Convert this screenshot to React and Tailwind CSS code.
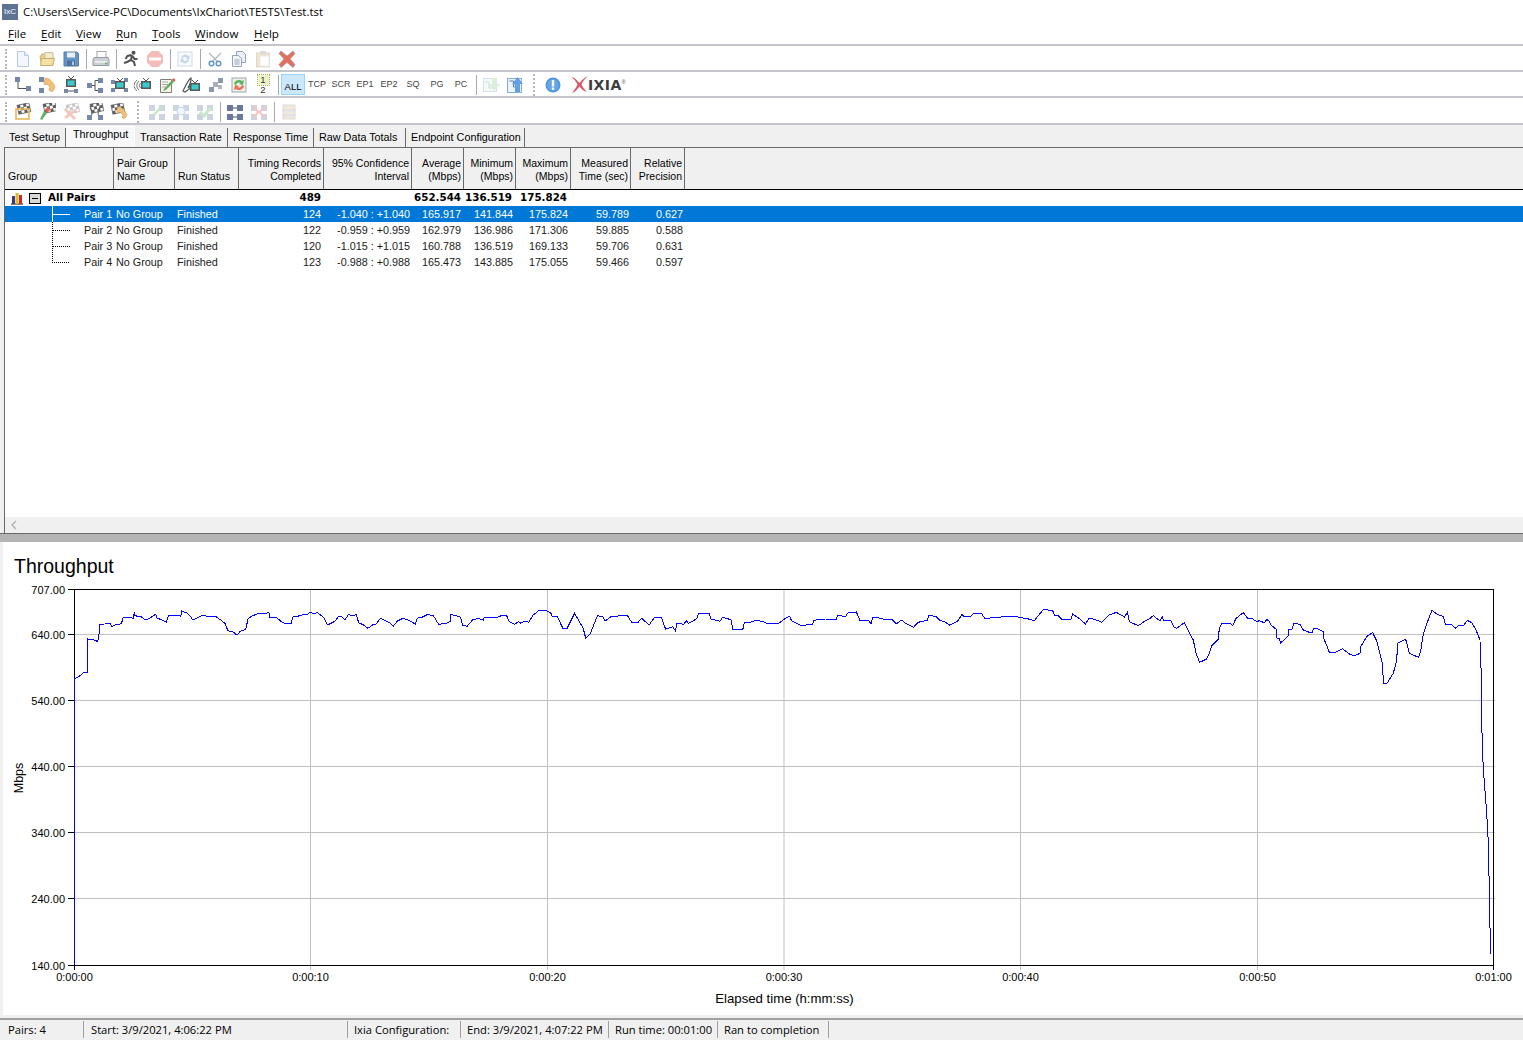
import React from "react";

const A = [[40,282],[50,277],[65,264],[77,261],[77,162],[100,166],[105,170],[109,158],[110,118],[125,117],[140,115],[145,124],[155,120],[172,116],[177,97],[192,97],[205,100],[208,82],[210,92],[228,96],[240,105],[255,97],[268,88],[272,100],[285,104],[298,112],[303,93],[320,92],[333,90],[338,95],[341,78],[355,84],[366,95],[372,105],[385,98],[400,91],[420,96],[435,94],[450,105],[462,115],[470,137],[485,141],[495,150],[505,139],[520,133],[527,100],[540,92],[556,85],[575,87],[585,81],[587,97],[607,98],[620,110],[632,117],[647,115],[653,95],[668,93],[680,89],[690,90],[700,82],[712,87],[720,82],[738,97],[748,117],[755,117],[770,109],[780,94],[790,96],[798,104],[808,88],[818,93],[830,88],[836,113],[850,120],[862,130],[875,120],[885,117],[897,100],[910,106],[925,115],[933,124],[945,108],[960,100],[975,105],[995,117],[1000,100],[1015,96],[1028,89],[1045,91],[1060,118],[1082,115],[1092,110],[1094,88],[1112,93],[1122,97],[1127,120],[1140,124],[1155,105],[1170,100],[1185,105],[1188,97],[1225,97],[1240,90],[1250,90],[1258,110],[1272,118],[1285,110],[1290,115],[1300,108],[1312,112],[1325,90],[1340,77],[1358,75],[1375,85],[1378,93],[1392,94],[1408,130],[1420,130],[1441,85],[1465,130],[1472,160],[1485,145],[1505,92]];
const B = [[0,64],[8,65],[14,78],[30,65],[50,63],[75,61],[87,82],[105,82],[114,70],[125,80],[135,90],[150,67],[170,69],[180,102],[200,95],[207,107],[212,84],[230,88],[238,77],[243,85],[265,72],[272,55],[300,55],[305,72],[330,79],[337,67],[360,74],[366,105],[393,102],[397,81],[415,81],[430,76],[450,80],[460,86],[490,86],[510,70],[522,64],[527,78],[545,87],[555,92],[585,87],[588,76],[620,72],[650,72],[654,61],[675,65],[682,53],[705,51],[715,77],[740,78],[745,87],[750,67],[775,70],[780,73],[805,75],[815,86],[830,75],[840,85],[862,97],[875,82],[900,76],[905,60],[925,65],[935,76],[950,82],[962,91],[985,77],[995,58],[1000,64],[1020,63],[1027,55],[1048,54],[1058,70],[1090,68],[1115,64],[1140,64],[1160,68],[1178,72],[1195,77],[1205,62],[1220,43],[1245,47],[1250,60],[1260,62],[1270,73],[1295,72],[1300,57],[1320,72],[1335,87],[1345,70],[1360,73],[1380,82],[1400,60],[1420,52],[1442,66],[1450,52],[1456,80],[1480,92],[1500,77]];
const C = [[0,100],[10,92],[30,108],[37,95],[40,105],[62,105],[72,127],[80,130],[103,113],[125,158],[130,165],[138,205],[149,232],[170,222],[178,205],[185,182],[205,162],[208,130],[215,116],[240,115],[248,122],[258,100],[280,83],[292,99],[305,100],[320,110],[328,107],[343,113],[350,104],[357,107],[362,120],[378,132],[381,160],[389,160],[391,175],[415,152],[417,133],[426,133],[431,115],[450,118],[460,135],[478,142],[488,142],[490,130],[500,130],[520,140],[522,163],[532,185],[538,202],[557,202],[577,191],[600,208],[612,213],[630,205],[633,183],[652,153],[668,143],[680,168],[698,240],[700,296],[712,294],[730,265],[740,225],[743,174],[767,163],[778,205],[805,217],[812,200],[818,155],[828,122],[846,76],[860,87],[880,95],[886,118],[905,120],[916,130],[925,122],[942,120],[952,106],[965,113],[978,135],[990,165],[991,248],[994,250]];
const D = [[124,0],[125,65],[128,170],[131,222],[135,272],[139,322],[142,372],[145,425],[147,527],[149,590],[150,685],[152,762]];

const tracePoints = [
  [74.5, 965],
  ...A.map(([x, y]) => [60 + x / 2.8, 585 + y / 3]),
  ...B.map(([x, y]) => [600 + x / 2.75, 595 + y / 3]),
  ...C.map(([x, y]) => [1150 + x / 3, 585 + y / 3]),
  ...D.map(([x, y]) => [1440 + x / 3, 700 + y / 3]),
]
  .map(([x, y]) => `${x.toFixed(1)},${y.toFixed(1)}`)
  .join(" ");

const Ico = ({ children, faded }) => (
  <div className="w-6 h-6 flex items-center justify-center shrink-0">
    <svg width="18" height="18" viewBox="0 0 18 18" className={faded ? "opacity-30" : "opacity-85"}>
      {children}
    </svg>
  </div>
);
const Sq = ({ x, y, s = 4, c = "#5f7498" }) => <rect x={x} y={y} width={s} height={s} fill={c} />;
const Tv = ({ x = 6, y = 5 }) => (
  <g>
    <path d={`M${x + 2} ${y - 4}l3 3 3-3`} stroke="#333" fill="none" />
    <rect x={x} y={y - 1} width="10" height="8" fill="#3b3b32" />
    <rect x={x + 1.5} y={y + 0.5} width="7" height="5" fill="#17c3c9" />
  </g>
);
const Flag = ({ x = 3, y = 1 }) => (
  <g transform={`rotate(-12 ${x + 6} ${y + 5})`}>
    <rect x={x} y={y} width="12" height="9" fill="#fff" stroke="#666" />
    <path d={`M${x} ${y}h3v3h-3zM${x + 6} ${y}h3v3h-3zM${x + 3} ${y + 3}h3v3h-3zM${x + 9} ${y + 3}h3v3h-3zM${x} ${y + 6}h3v3h-3zM${x + 6} ${y + 6}h3v3h-3z`} fill="#444" />
  </g>
);
const Phone = () => (
  <path d="M8 2c2 0 7 3 9 9l-2 4c-1 1-4 0-4-1l1-3-3-3-2 1C5 7 6 2 8 2z" fill="#efb660" stroke="#c58a3c" strokeWidth=".6" />
);

const toolbar1 = [
  <Ico key="n"><path d="M3.5 1.5h7l4 4v11h-11z" fill="#f1f6fd" stroke="#a7c1e2" /><path d="M10.5 1.5v4h4" fill="#dce9f8" stroke="#a7c1e2" /></Ico>,
  <Ico key="o"><path d="M2 7l2-3h4l1 1.500h6v10H4z" fill="#e6c877" stroke="#bca35a" /><path d="M7 2.500h8v7H7z" fill="#f2e6c2" stroke="#c6b98e" /><path d="M3.500 8.500h13l-2 7h-12z" fill="#f3dc94" stroke="#bca35a" /></Ico>,
  <Ico key="s"><path d="M2 2h13l1.500 1.500V16H2z" fill="#4c82bb" stroke="#3a6797" /><rect x="5" y="2.500" width="8" height="5" fill="#e6eef7" /><rect x="5" y="10.500" width="8" height="5.500" fill="#2e5a8a" /><rect x="10" y="11.500" width="2" height="3.500" fill="#a9c3de" /></Ico>,
  "s6",
  <Ico key="p"><rect x="5" y="1.500" width="9" height="6" fill="#fff" stroke="#9a9a9a" /><path d="M2 7.500h14l1 2.500v5.500H1V10z" fill="#c2c8cf" stroke="#858b93" /><rect x="3" y="11" width="12" height="1.500" fill="#eef0f2" /><rect x="13" y="12.800" width="2.500" height="1.500" fill="#3fae49" /></Ico>,
  "s6",
  <Ico key="r"><circle cx="11.500" cy="2.800" r="2" fill="#333" /><path d="M9.500 5l-4 1-2 3M10 5l-1 5-4 2-3 1M9 10l3 2 1 4M10.500 6l2 3 3 0" stroke="#333" strokeWidth="2" fill="none" /></Ico>,
  <Ico key="st" faded><path d="M5.500 1h7L17 5.500v7L12.500 17h-7L1 12.500v-7z" fill="#d9231c" /><rect x="3" y="7.500" width="12" height="3" fill="#fff" /></Ico>,
  "s6",
  <Ico key="rf" faded><rect x="2" y="2" width="14" height="14" fill="#eef4fb" stroke="#5d8fc9" /><path d="M5 8a4 4 0 0 1 7-2l1.500-1v4h-4l1.500-1a2.500 2.500 0 0 0-4.500 1zM13 10a4 4 0 0 1-7 2l-1.500 1V9h4L7 10a2.500 2.500 0 0 0 4.500-1z" fill="#3b7cc4" /></Ico>,
  "s6",
  <Ico key="c"><path d="M3 3l8 8M15 3l-8 8" stroke="#a7adb7" strokeWidth="1.300" /><circle cx="5.500" cy="13.500" r="2.300" fill="none" stroke="#4a82c4" strokeWidth="1.500" /><circle cx="12.500" cy="13.500" r="2.300" fill="none" stroke="#4a82c4" strokeWidth="1.500" /></Ico>,
  <Ico key="cp"><path d="M6.500 1.500h6l3 3v8h-9z" fill="#e8ecf4" stroke="#8793ad" /><path d="M2.500 5.500h6l3 3v8h-9z" fill="#eef1f7" stroke="#8793ad" /><path d="M4.500 10h5M4.500 12h5M4.500 14h5" stroke="#8793ad" /></Ico>,
  <Ico key="pa" faded><rect x="2.500" y="3" width="13" height="14" fill="#dca863" stroke="#a07a40" /><rect x="6" y="1" width="6" height="3.500" fill="#8a8a8a" /><rect x="6" y="6" width="9" height="10" fill="#fff" stroke="#b9b9b9" /></Ico>,
  <Ico key="d"><path d="M3 1l6 5 6-5 2 2.500-5 5.500 5 5.500-2 3-6-5-6 5-2-3 5-5.500-5-5.500z" fill="#e0553f" stroke="#8b8f98" strokeWidth=".8" /></Ico>,
];

const toolbar2 = [
  <Ico key="a"><Sq x={1} y={1} s={5} /><Sq x={12} y={10} s={5} /><path d="M4 6v6.500h8" stroke="#333" fill="none" /></Ico>,
  <Ico key="b"><Sq x={1} y={1} s={5} /><Sq x={1} y={12} s={5} /><Phone /></Ico>,
  <Ico key="c"><Tv x={4} y={4} /><Sq x={2} y={13} s={4} /><Sq x={12} y={13} s={4} /><path d="M6 15h6" stroke="#333" /></Ico>,
  <Ico key="d"><Sq x={1} y={7} s={5} /><Sq x={12} y={2} s={5} /><Sq x={12} y={12} s={5} /><path d="M6 9.500h3M9 4.500v10M9 4.500h3M9 14.500h3" stroke="#333" fill="none" /></Ico>,
  <Ico key="e"><Sq x={1} y={4} s={4} /><Sq x={1} y={12} s={4} /><Sq x={14} y={2} s={4} /><Sq x={14} y={12} s={4} /><Tv x={5} y={6} /></Ico>,
  <Ico key="f"><Tv x={7} y={6} /><path d="M5 5c-3 3-3 6 0 9M3 4c-4 4-4 7 0 11M6.500 7c-1.500 2-1.500 3 0 5" stroke="#555" fill="none" /></Ico>,
  <Ico key="g"><path d="M2.500 3.500h11v13h-11z" fill="#fbf4e4" stroke="#666" /><path d="M4 6h6M4 8.500h6M4 11h4" stroke="#999" /><path d="M6 13l8-9 2 2-8 8-3 1z" fill="#47a34a" /><path d="M14 4l1.500-2 2 2-1.500 2z" fill="#d5342a" /></Ico>,
  <Ico key="h"><path d="M1 15C4 9 6 4 9 2c1 2-2 8-3 10 1-1 3-2 3-1s-3 3-6 5z" fill="none" stroke="#333" strokeWidth="1.200" /><Tv x={8} y={8} /></Ico>,
  <Ico key="i"><Sq x={3} y={11} s={5} c="#7a869c" /><Sq x={7} y={6} s={5} c="#98a2b4" /><Sq x={12} y={2} s={5} c="#7a869c" /><Sq x={12} y={9} s={4} c="#a2a9b8" /></Ico>,
  <Ico key="j"><rect x="2" y="2" width="14" height="14" fill="#e9ece8" stroke="#8b9aa0" /><path d="M4 8a5 5 0 0 1 8-3l2-1-1 5-4-1 1.500-1A3 3 0 0 0 6 9z" fill="#45a548" /><path d="M14 10a5 5 0 0 1-8 3l-2 1 1-5 4 1-1.500 1a3 3 0 0 0 4.500-2z" fill="#e4572e" /></Ico>,
  <div key="k" className="w-6 h-6 flex flex-col items-center justify-center shrink-0 text-[9.5px] leading-[10px] text-[#333]">
    <span className="w-[11px] h-[10px] bg-[#eef3c8] outline outline-dotted outline-[#9ab35c] text-center">1</span>
    <span>2</span>
  </div>,
  "s6",
  <div key="all" className="w-6 h-[21px] bg-[#cce8ff] border border-[#99d1ff] flex items-end justify-center text-[9.5px] leading-[15px] shrink-0">ALL</div>,
  ...["TCP", "SCR", "EP1", "EP2", "SQ", "PG", "PC"].map((t) => (
    <div key={t} className="w-6 h-6 flex items-center justify-center text-[9px] text-[#444] shrink-0">{t}</div>
  )),
  "s6",
  <Ico key="dn" faded><rect x="1.500" y="2.500" width="13" height="13" fill="#e6f2e6" stroke="#6d9fd0" /><path d="M3 6h4v6h3M7 9h3" stroke="#5588bb" fill="none" /><path d="M10 2h5v6h3l-5.500 7L7 8h3z" fill="#8cc98f" /></Ico>,
  <Ico key="up"><rect x="1.500" y="2.500" width="14" height="14" fill="#e9f1fa" stroke="#6d9fd0" /><path d="M3.500 5h4v6h3M7.500 8h3" stroke="#34679e" fill="none" /><path d="M11.500 1l5.500 7h-3v8h-5V8H6z" fill="#4a90dc" /></Ico>,
  "grip",
  <Ico key="info"><circle cx="9" cy="9" r="7.500" fill="#2f80d8" /><circle cx="9" cy="9" r="6" fill="#4b97e6" /><rect x="7.800" y="4" width="2.400" height="6.500" fill="#fff" /><rect x="7.800" y="11.500" width="2.400" height="2.400" fill="#fff" /></Ico>,
  <div key="logo" className="flex items-center ml-[6px] h-6 shrink-0">
    <svg width="17" height="17" viewBox="0 0 17 17">
      <path d="M0 1c3 0 5 2 8.500 6C12 3 14 1 17 0c-3 3-5 5-6.500 8.500C12 12 14 14 16 16c-3-1-5-2-7.500-5.500C6 14 4 16 1 17c2-3 4-5 5.500-8.500C5 5 3 3 0 1z" fill="#d9596b" />
    </svg>
    <span className="[font-family:DejaVu_Sans,sans-serif] font-bold text-[14px] leading-none text-[#3d3d3d] tracking-[0.4px]">IXIA</span>
    <span className="text-[5px] leading-none self-start mt-[7px] text-[#3d3d3d]">®</span>
  </div>,
];

const toolbar3 = [
  <Ico key="a"><Flag x={4} y={1} /><rect x="2" y="6" width="13" height="10" fill="none" stroke="#e1a92f" strokeWidth="1.500" /></Ico>,
  <Ico key="b"><Flag x={6} y={0} /><path d="M2 16l4-8 3 2-5 7z" fill="#49a64c" /><path d="M7 6l4-2 1 3-3 3z" fill="#e1453a" /></Ico>,
  <Ico key="c" faded><Flag x={5} y={1} /><path d="M3 5l5 4 5-3 1 2-4 3 4 4-2 2-4-4-4 3-2-2 4-3-4-4z" fill="#d9492f" /></Ico>,
  <Ico key="d"><Flag x={5} y={0} /><path d="M4 3l2 8M14 3l-2 8M6 11l-2 3M12 11l2 3" stroke="#444" /><Sq x={1} y={12} s={5} /><Sq x={12} y={12} s={5} /></Ico>,
  <Ico key="e"><Flag x={2} y={1} /><path d="M9 4c2 0 6 3 8 8l-2 3c-1 1-3 0-3-1l1-2-3-3-2 1C6 8 7 4 9 4z" fill="#efb660" stroke="#c58a3c" strokeWidth=".6" /></Ico>,
  "grip",
  <Ico key="f" faded><Sq x={1} y={2} s={6} /><Sq x={1} y={11} s={6} /><Sq x={11} y={2} s={6} /><Sq x={11} y={11} s={6} /><path d="M6 12l7-8" stroke="#4bae4f" strokeWidth="2.500" /></Ico>,
  <Ico key="h" faded><Sq x={1} y={2} s={6} /><Sq x={1} y={11} s={6} /><Sq x={11} y={2} s={6} /><Sq x={11} y={11} s={6} /><circle cx="9" cy="8" r="4" fill="#d9e8f8" stroke="#3b7cc4" /><path d="M12 11l4 4" stroke="#3b7cc4" strokeWidth="2" /></Ico>,
  <Ico key="i" faded><Sq x={1} y={2} s={6} /><Sq x={1} y={11} s={6} /><Sq x={11} y={2} s={6} /><Sq x={11} y={11} s={6} /><path d="M4 9l4 4 7-9" stroke="#4bae4f" strokeWidth="3" fill="none" /></Ico>,
  "s6",
  <Ico key="j"><Sq x={1} y={2} s={6} c="#4f628a" /><Sq x={11} y={2} s={6} c="#4f628a" /><Sq x={1} y={11} s={6} c="#4f628a" /><Sq x={11} y={11} s={6} c="#4f628a" /><path d="M7 5h4M7 14h4" stroke="#333" /></Ico>,
  <Ico key="k" faded><Sq x={1} y={2} s={6} /><Sq x={11} y={2} s={6} /><Sq x={1} y={11} s={6} /><Sq x={11} y={11} s={6} /><path d="M4 3l5 5 5-5 1 2-4 4 4 4-1 2-5-5-5 5-1-2 4-4-4-4z" fill="#d9492f" /></Ico>,
  "s6",
  <Ico key="l" faded><rect x="3" y="2" width="12" height="14" fill="#d8b27c" stroke="#8b8b8b" /><rect x="2" y="6" width="14" height="2.500" fill="#9aa3b5" /><rect x="2" y="11" width="14" height="2.500" fill="#9aa3b5" /></Ico>,
];

const Bar = ({ items, h = "h-[26px] pt-px" }) => (
  <div className={`${h} shrink-0 bg-white border-b-2 border-[#c4c4cc] flex items-center pl-[5px]`}>
    <div className="w-0 h-[20px] border-l-2 border-dotted border-[#b5b5b5] mr-[4px] shrink-0" />
    {items.map((it, i) =>
      it === "s6" ? (
        <div key={i} className="w-[6px] flex justify-center shrink-0">
          <div className="w-px h-[20px] bg-[#a8a8a8]" />
        </div>
      ) : it === "grip" ? (
        <div key={i} className="w-[14px] flex justify-center shrink-0">
          <div className="w-0 h-[22px] border-l-2 border-dotted border-[#b5b5b5]" />
        </div>
      ) : (
        it
      )
    )}
  </div>
);

const Menu = ({ t, rest, cls }) => (
  <span className={cls}>
    <span className="underline underline-offset-2">{t}</span>
    {rest}
  </span>
);

const tabs = [
  ["Test Setup", "w-[63px] pl-[6px]"],
  ["Throughput", "w-[69px] pl-[7px]", true],
  ["Transaction Rate", "w-[93px] pl-[5px]"],
  ["Response Time", "w-[86px] pl-[5px]"],
  ["Raw Data Totals", "w-[92px] pl-[5px]"],
  ["Endpoint Configuration", "w-[119px] pl-[5px]"],
];

const cols = "grid grid-cols-[109px_61px_64px_85px_88px_52px_52px_55px_60px_54px]";

const headers = [
  ["Group", "pl-[3px]"],
  ["Pair Group\nName", "pl-[3px]"],
  ["Run Status", "pl-[3px]"],
  ["Timing Records\nCompleted", "text-right pr-[2px]"],
  ["95% Confidence\nInterval", "text-right pr-[2px]"],
  ["Average\n(Mbps)", "text-right pr-[2px]"],
  ["Minimum\n(Mbps)", "text-right pr-[2px]"],
  ["Maximum\n(Mbps)", "text-right pr-[2px]"],
  ["Measured\nTime (sec)", "text-right pr-[2px]"],
  ["Relative\nPrecision", "text-right pr-[2px]"],
];

const rows = [
  ["Pair 1", "No Group", "Finished", "124", "-1.040 : +1.040", "165.917", "141.844", "175.824", "59.789", "0.627"],
  ["Pair 2", "No Group", "Finished", "122", "-0.959 : +0.959", "162.979", "136.986", "171.306", "59.885", "0.588"],
  ["Pair 3", "No Group", "Finished", "120", "-1.015 : +1.015", "160.788", "136.519", "169.133", "59.706", "0.631"],
  ["Pair 4", "No Group", "Finished", "123", "-0.988 : +0.988", "165.473", "143.885", "175.055", "59.466", "0.597"],
];

const yTicks = [
  [707, 589.5, false],
  [640, 634.5, true],
  [540, 700.5, true],
  [440, 766.5, true],
  [340, 832.5, true],
  [240, 898.5, true],
  [140, 965.5, false],
];
const xTicks = [
  ["0:00:00", 74.5],
  ["0:00:10", 310.5],
  ["0:00:20", 547.5],
  ["0:00:30", 784],
  ["0:00:40", 1020.5],
  ["0:00:50", 1257.5],
  ["0:01:00", 1493.5],
];

const status = [
  ["Pairs: 4", "w-[84px] pl-[8px]"],
  ["Start: 3/9/2021, 4:06:22 PM", "w-[264px] pl-[7px]"],
  ["Ixia Configuration:", "w-[113px] pl-[6px]"],
  ["End: 3/9/2021, 4:07:22 PM", "w-[148px] pl-[6px]"],
  ["Run time: 00:01:00", "w-[109px] pl-[6px]"],
  ["Ran to completion", "w-[111px] pl-[6px]"],
];

export default function App() {
  return (
    <div className="w-[1523px] h-[1040px] overflow-hidden flex flex-col bg-white text-black [font-family:Liberation_Sans,sans-serif]">
      <div className="h-[23px] shrink-0 flex items-center pl-[2px] gap-[5px] [font-family:Open_Sans,sans-serif] text-[11.4px]">
        <div className="w-4 h-4 bg-[#5d7396] text-white text-[8px] leading-[16px] text-center [font-family:Liberation_Sans,sans-serif]">IxC</div>
        <span className="mt-px">C:\Users\Service-PC\Documents\IxChariot\TESTS\Test.tst</span>
      </div>
      <div className="h-[23px] shrink-0 border-b-2 border-[#c4c4cc] flex items-center pl-[8px] [font-family:Open_Sans,sans-serif] text-[11.5px]">
        <Menu t="F" rest="ile" cls="w-[33px]" />
        <Menu t="E" rest="dit" cls="w-[35px]" />
        <Menu t="V" rest="iew" cls="w-[40px]" />
        <Menu t="R" rest="un" cls="w-[36px]" />
        <Menu t="T" rest="ools" cls="w-[43px]" />
        <span className="w-[59px]">
          <span className="underline underline-offset-2">W</span>indow
        </span>
        <Menu t="H" rest="elp" cls="" />
      </div>
      <Bar items={toolbar1} />
      <Bar items={toolbar2} />
      <Bar items={toolbar3} h="h-[27px] pt-[2px]" />

      <div className="h-[22px] shrink-0 bg-[#f0f0f0] flex items-end pl-[3px] text-[10.8px] leading-[18px]">
        {tabs.map(([t, c, active]) => (
          <div
            key={t}
            className={`${c} shrink-0 border-r border-[#696969] whitespace-nowrap ${active ? "h-[21px] bg-[#f8f8f8] border-t border-white leading-[15px]" : "h-[19px]"}`}
          >
            {t}
          </div>
        ))}
      </div>

      <div className="h-[386px] shrink-0 bg-[#f0f0f0] pl-[4px]">
        <div className="h-full border-l border-t border-[#696969] bg-white flex flex-col text-[10.8px]">
          <div className="h-[42px] shrink-0 border-b border-black bg-[#f0f0f0] text-[10.5px]">
            <div className={`${cols} h-full`}>
              {headers.map(([t, c], i) => (
                <div key={i} className={`${c} border-r border-[#696969] flex flex-col justify-end pb-[6px] leading-[13px] whitespace-pre-line`}>
                  <div>{t}</div>
                </div>
              ))}
            </div>
          </div>
          <div className={`${cols} h-4 shrink-0 items-center [font-family:DejaVu_Sans,sans-serif] font-bold text-[10.300px]`}>
            <div className="flex items-center pl-[5px] whitespace-nowrap">
              <svg width="14" height="14" viewBox="0 0 14 14" className="shrink-0">
                <path d="M1 13h12" stroke="#555" strokeWidth="1.500" />
                <rect x="2" y="5" width="3" height="8" fill="#3a3a8c" />
                <rect x="5.500" y="2" width="3" height="11" fill="#e0b92a" />
                <rect x="9" y="4" width="3" height="9" fill="#cf2a27" />
              </svg>
              <div className="ml-[5px] w-[12px] h-[11px] border border-black bg-[#d8d8d8] flex items-center justify-center shrink-0">
                <div className="w-[6px] h-px bg-black" />
              </div>
              <span className="ml-[7px]">All Pairs</span>
            </div>
            <div /><div />
            <div className="text-right pr-[3px]">489</div>
            <div />
            <div className="text-right pr-[3px]">652.544</div>
            <div className="text-right pr-[4px]">136.519</div>
            <div className="text-right pr-[4px]">175.824</div>
            <div /><div />
          </div>
          {rows.map((r, i) => {
            const sel = i === 0;
            const last = i === rows.length - 1;
            return (
              <div key={r[0]} className={`${cols} h-4 shrink-0 items-center leading-4 ${sel ? "bg-[#0078d7] text-white" : "text-[#1a1a1a]"}`}>
                <div className="flex items-center pl-[47px]">
                  <svg width="20" height="16" viewBox="0 0 20 16" className="shrink-0" shapeRendering="crispEdges">
                    <path
                      d={last ? "M0.5 0V8.500H18" : "M0.500 0V16M0.500 8.500H18"}
                      stroke={sel ? "#fff" : "#000"}
                      strokeDasharray={sel ? undefined : "1 1"}
                      fill="none"
                    />
                  </svg>
                  <span className="ml-[12px] whitespace-nowrap">{r[0]}</span>
                </div>
                <div className="pl-[2px] whitespace-nowrap">{r[1]}</div>
                <div className="pl-[2px] whitespace-nowrap">{r[2]}</div>
                <div className="text-right pr-[3px]">{r[3]}</div>
                <div className="text-right pr-[2px] whitespace-nowrap">{r[4]}</div>
                <div className="text-right pr-[3px]">{r[5]}</div>
                <div className="text-right pr-[3px]">{r[6]}</div>
                <div className="text-right pr-[3px]">{r[7]}</div>
                <div className="text-right pr-[2px]">{r[8]}</div>
                <div className="text-right pr-[2px]">{r[9]}</div>
              </div>
            );
          })}
          <div className="flex-1" />
          <div className="h-[16px] shrink-0 bg-[#f0f0f0] flex items-center pl-[5px]">
            <svg width="8" height="10" viewBox="0 0 8 10"><path d="M6 1L2 5l4 4" stroke="#b5b5b5" strokeWidth="1.500" fill="none" /></svg>
          </div>
        </div>
      </div>
      <div className="h-[9px] shrink-0 border-t border-[#696969] bg-[#b4b4b4]" />

      <div className="flex-1 min-h-0 border-l-[3px] border-[#f0f0f0] bg-white flex flex-col">
        <div className="h-[36px] shrink-0 pl-[11px] pt-[13px] text-[19.5px] leading-[22px]">Throughput</div>
        <svg width="1520" height="437" viewBox="3 578 1520 437" className="shrink-0">
          {yTicks.map(([v, y, grid]) => (
            <g key={v}>
              {grid && <line x1="74" x2="1495" y1={y} y2={y} stroke="#c0c0c0" />}
              <line x1="68" x2="74" y1={y} y2={y} stroke="#000" />
              <text x="65" y={y + 4} textAnchor="end" className="text-[11px]">{v}.00</text>
            </g>
          ))}
          {xTicks.map(([t, x], i) => (
            <g key={t}>
              {i > 0 && i < 6 && <line x1={x} x2={x} y1="590" y2="970" stroke="#c0c0c0" />}
              {(i === 0 || i === 6) && <line x1={x} x2={x} y1="965" y2="970" stroke="#000" />}
              <text x={x} y="981" textAnchor="middle" className="text-[11px]">{t}</text>
            </g>
          ))}
          <rect x="74.500" y="589.500" width="1419" height="376" fill="none" stroke="#000" />
          <polyline points={tracePoints} fill="none" stroke="#0000ff" strokeWidth="1" shapeRendering="crispEdges" />
          <text x="784.500" y="1003" textAnchor="middle" className="text-[13.200px]">Elapsed time (h:mm:ss)</text>
          <text x="0" y="0" transform="translate(23 778) rotate(-90)" textAnchor="middle" className="text-[12.500px]">Mbps</text>
        </svg>
      </div>

      <div className="h-[3px] shrink-0 bg-[#f0f0f0]" />
      <div className="h-[22px] shrink-0 border-t-2 border-[#a0a0a0] bg-[#f0f0f0] flex items-center pb-px [font-family:Open_Sans,sans-serif] text-[11.2px]">
        {status.map(([t, c]) => (
          <div key={t} className={`${c} h-[17px] leading-[17px] border-r border-[#a0a0a0] whitespace-nowrap shrink-0`}>{t}</div>
        ))}
      </div>
    </div>
  );
}
